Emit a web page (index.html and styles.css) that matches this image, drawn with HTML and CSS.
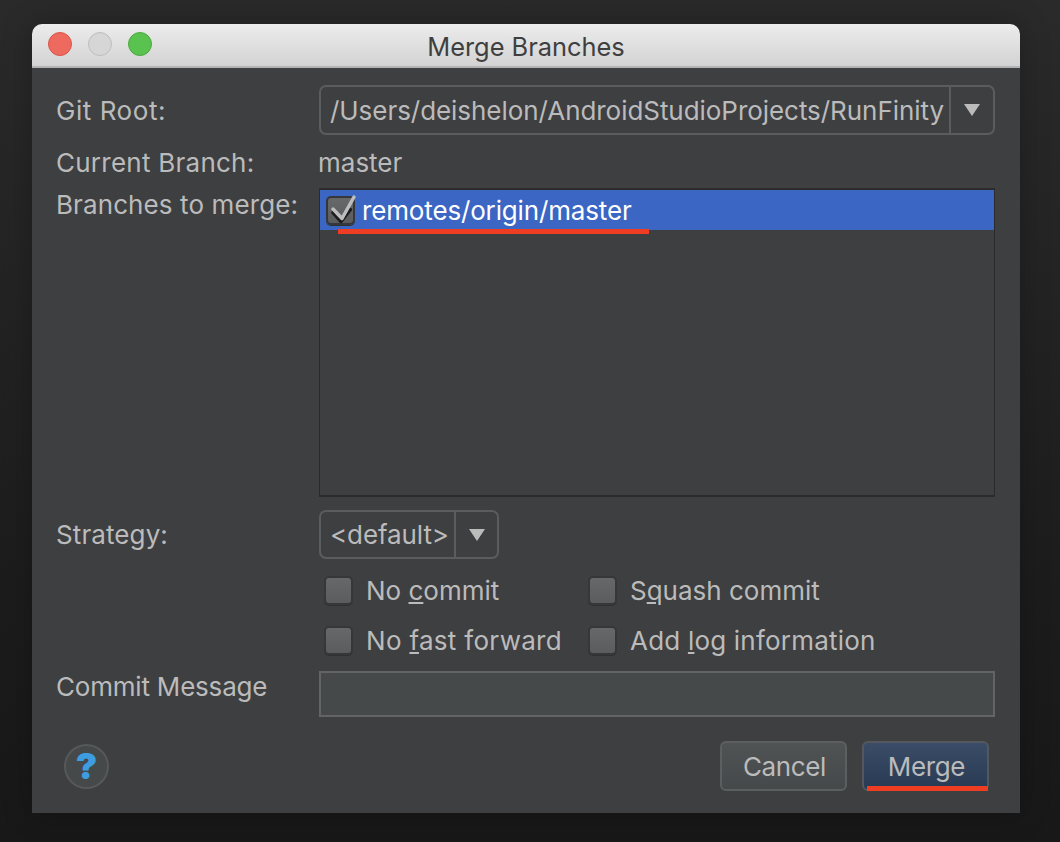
FILE: index.html
```html
<!DOCTYPE html>
<html lang="en">
<head>
<meta charset="utf-8">
<title>Merge Branches</title>
<link rel="stylesheet" href="styles.css">
</head>
<body>
<div class="window">
  <header class="titlebar">
    <div class="lights">
      <span class="light red"></span>
      <span class="light grey"></span>
      <span class="light green"></span>
    </div>
    <div class="title">Merge Branches</div>
  </header>
  <main class="content">
    <div class="form">
      <div class="label root-label">Git Root:</div>
      <div class="combo root-combo">
        <div class="combo-value">/Users/deishelon/AndroidStudioProjects/RunFinity</div>
        <div class="combo-arrow"><span class="triangle"></span></div>
      </div>

      <div class="label branch-label">Current Branch:</div>
      <div class="branch-value">master</div>

      <div class="label merge-label">Branches to merge:</div>
      <div class="list">
        <div class="list-row">
          <span class="check checked">
            <svg class="tick" width="30" height="30" viewBox="0 0 30 30"><path class="tick-shadow" d="M7 16.500l8 9 9.500-12"/><path class="tick-main" d="M7 13l9 9.500L28 1"/></svg>
          </span>
          <span class="list-text">remotes/origin/master</span>
        </div>
        <span class="annot annot-list"></span>
      </div>

      <div class="label strategy-label">Strategy:</div>
      <div class="combo strategy-combo">
        <div class="combo-value">&lt;default&gt;</div>
        <div class="combo-arrow"><span class="triangle"></span></div>
      </div>

      <div class="options">
        <label class="option"><span class="check"></span><span class="opt-tight">No <u>c</u>ommit</span></label>
        <label class="option"><span class="check"></span><span class="opt-tight">S<u>q</u>uash commit</span></label>
        <label class="option"><span class="check"></span><span>No <u>f</u>ast forward</span></label>
        <label class="option"><span class="check"></span><span class="opt-log">Add <u>l</u>og information</span></label>
      </div>

      <div class="label message-label">Commit Message</div>
      <div class="message-field"></div>
    </div>

    <footer class="actions">
      <div class="help">?</div>
      <div class="buttons">
        <button class="btn">Cancel</button>
        <button class="btn primary">Merge<span class="annot annot-btn"></span></button>
      </div>
    </footer>
  </main>
</div>
</body>
</html>
```
FILE: styles.css
```css
* { box-sizing: border-box; }
html, body { margin: 0; height: 100%; }
body {
  width: 1060px;
  height: 842px;
  overflow: hidden;
  padding: 24px 40px 0 32px;
  background: linear-gradient(#2a2a2a 0, #242424 30%, #1c1c1c 70%, #181818 100%);
  font-family: Inter, "Liberation Sans", sans-serif;
  font-size: 26px;
  color: #bbbbbb;
}
.window {
  width: 988px;
  height: 789px;
  display: flex;
  flex-direction: column;
  border-radius: 10px 10px 0 0;
  overflow: hidden;
  box-shadow: 0 0 30px rgba(0, 0, 0, .25);
}
.titlebar {
  height: 44px;
  flex: none;
  display: flex;
  align-items: center;
  position: relative;
  background: linear-gradient(#ececec, #d3d3d3);
  border-bottom: 2px solid #b4b4b4;
}
.lights { display: flex; gap: 16px; padding-left: 16px; margin-top: -2px; }
.light { width: 24px; height: 24px; border-radius: 50%; border: 1px solid; }
.red { background: #ef6a5e; border-color: #d9544a; }
.grey { background: #d6d6d6; border-color: #bdbdbd; }
.green { background: #5ac24f; border-color: #4aa93f; }
.title {
  position: absolute;
  inset: 0;
  display: flex;
  align-items: center;
  justify-content: center;
  color: #3f3f3f;
  font-size: 25.4px;
  padding-top: 3px;
}
.content {
  flex: 1;
  background: #3e3f41;
  padding: 17px 25px 0 25px;
  display: flex;
  flex-direction: column;
}
.form {
  display: grid;
  grid-template-columns: 262px 676px;
  grid-template-rows: 50px 53px 309px 62px 112px 46px;
  align-items: start;
}
.label { line-height: 30px; white-space: nowrap; margin-left: -1px; letter-spacing: .1px; }
.root-label { align-self: center; padding-top: 2px; letter-spacing: .55px; }
.branch-label { margin-top: 13px; letter-spacing: .25px; }
.merge-label { margin-top: 2px; }
.strategy-label { margin-top: 23px; }
.message-label { margin-top: 1px; grid-row: 6; letter-spacing: -.2px; }
.branch-value { line-height: 30px; margin-top: 13px; margin-left: -1px; }
.combo {
  display: flex;
  height: 50px;
  border: 2px solid #5a5d5f;
  border-radius: 7px;
}
.combo-value { flex: 1; line-height: 48px; padding-left: 9px; white-space: nowrap; overflow: hidden; letter-spacing: -.05px; }
.combo-arrow {
  width: 44px;
  flex: none;
  border-left: 2px solid #5a5d5f;
  display: flex;
  align-items: center;
  justify-content: center;
}
.triangle {
  width: 0;
  height: 0;
  border-left: 8px solid transparent;
  border-right: 8px solid transparent;
  border-top: 12px solid #bbbbbb;
}
.strategy-combo { width: 180px; height: 49px; margin-top: 13px; }
.strategy-combo .combo-value { line-height: 45px; letter-spacing: -.1px; }
.strategy-combo .combo-arrow { width: 43px; }
.list {
  position: relative;
  height: 309px;
  border-style: solid;
  border-width: 2px 1px;
  border-color: #2b2b2b;
  background: #3e3f41;
}
.list-row {
  height: 40px;
  background: #3b66c3;
  display: flex;
  align-items: center;
  padding-left: 6px;
  gap: 7px;
  color: #ffffff;
}
.list-text { letter-spacing: -.15px; }
.check {
  position: relative;
  flex: none;
  width: 29px;
  height: 29px;
  border-radius: 5px;
  border: 2px solid #35383a;
  background: linear-gradient(#666869, #5a5c5e);
  box-shadow: 0 1px 0 #2f3133;
}
.tick { position: absolute; left: -2px; top: -2px; overflow: visible; }
.tick path { fill: none; stroke-linecap: round; stroke-linejoin: round; }
.tick-shadow { stroke: #1c1c1c; stroke-width: 3.500; }
.tick-main { stroke: #bdbdbd; stroke-width: 3.500; }
.annot { position: absolute; background: #ee3d22; }
.annot-list { left: 18px; top: 39px; width: 311px; height: 5px; }
.annot-btn { right: -1px; bottom: -2px; width: 121px; height: 5px; }
.options {
  grid-column: 2;
  grid-row: 5;
  display: grid;
  grid-template-columns: 264px auto;
  grid-auto-rows: 50px;
  justify-content: start;
  padding-left: 5px;
  margin-top: 6px;
  letter-spacing: .3px;
}
.option { display: flex; align-items: center; gap: 13px; white-space: nowrap; }
.opt-tight { letter-spacing: 0; }
.opt-log { letter-spacing: .2px; }
.message-field {
  grid-column: 2;
  height: 46px;
  background: #45494a;
  border: 2px solid #646464;
}
.actions {
  display: flex;
  align-items: center;
  justify-content: space-between;
  margin-top: 24px;
  padding: 0 6px 0 7px;
}
.help {
  width: 45px;
  height: 45px;
  border-radius: 50%;
  border: 2px solid #565859;
  background: #45494a;
  color: #3d9de0;
  font-size: 36px;
  font-weight: 900;
  line-height: 41px;
  text-align: center;
}
.buttons { display: flex; gap: 15px; }
.btn {
  position: relative;
  width: 127px;
  height: 50px;
  border-radius: 6px;
  border: 2px solid #5c5f60;
  background: linear-gradient(#505354, #46494b);
  color: #bbbbbb;
  font: inherit;
  letter-spacing: -.35px;
  padding: 0 0 0 2px;
}
.primary {
  border-color: #54585e;
  background: linear-gradient(#3b4c68, #293a53);
}
```
